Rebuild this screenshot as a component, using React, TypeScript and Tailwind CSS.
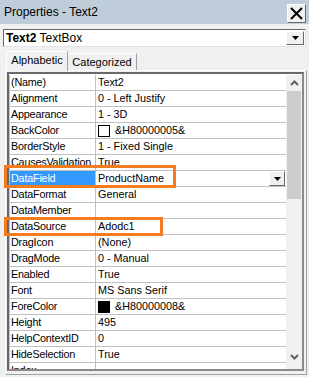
import type { ReactNode } from 'react'

type Row = {
  name: string
  value: string
  swatch?: 'white' | 'black'
  selected?: boolean
}

const rows: Row[] = [
  { name: '(Name)', value: 'Text2' },
  { name: 'Alignment', value: '0 - Left Justify' },
  { name: 'Appearance', value: '1 - 3D' },
  { name: 'BackColor', value: '&H80000005&', swatch: 'white' },
  { name: 'BorderStyle', value: '1 - Fixed Single' },
  { name: 'CausesValidation', value: 'True' },
  { name: 'DataField', value: 'ProductName', selected: true },
  { name: 'DataFormat', value: 'General' },
  { name: 'DataMember', value: '' },
  { name: 'DataSource', value: 'Adodc1' },
  { name: 'DragIcon', value: '(None)' },
  { name: 'DragMode', value: '0 - Manual' },
  { name: 'Enabled', value: 'True' },
  { name: 'Font', value: 'MS Sans Serif' },
  { name: 'ForeColor', value: '&H80000008&', swatch: 'black' },
  { name: 'Height', value: '495' },
  { name: 'HelpContextID', value: '0' },
  { name: 'HideSelection', value: 'True' },
  { name: 'Index', value: '' },
]

function DownTriangle() {
  return (
    <svg width="7" height="4" viewBox="0 0 7 4">
      <path d="M0 0h7L3.5 4z" fill="#000" />
    </svg>
  )
}

function SmallButton({ children, className }: { children: ReactNode; className: string }) {
  return (
    <div
      className={`flex items-center justify-center bg-[#f0f0f0] border border-t-white border-l-white border-r-[#696969] border-b-[#696969] ${className}`}
    >
      {children}
    </div>
  )
}

function PropRow({ row }: { row: Row }) {
  return (
    <div className="flex h-[16px] shrink-0 border-b border-[#c0c0c0]">
      <div
        className={`w-[86px] shrink-0 border-r border-[#c0c0c0] pl-[1px] leading-[15px] tracking-[-0.2px] whitespace-nowrap overflow-hidden ${
          row.selected ? 'bg-[#3399ff] text-white' : 'text-black'
        }`}
      >
        {row.name}
      </div>
      <div className="flex flex-1 items-center pl-[2px] leading-[15px] whitespace-nowrap overflow-hidden">
        {row.swatch && (
          <span
            className={`mr-[5px] h-[12px] w-[12px] border border-black ${
              row.swatch === 'white' ? 'bg-white' : 'bg-black'
            }`}
          />
        )}
        <span className="flex-1">{row.value}</span>
        {row.selected && (
          <SmallButton className="h-[15px] w-[16px] mr-[1px]">
            <DownTriangle />
          </SmallButton>
        )}
      </div>
    </div>
  )
}

export default function App() {
  return (
    <div
      className="relative h-[377px] w-[309px] overflow-hidden bg-[#f0f0f0] text-black"
      style={{ fontFamily: '"Liberation Sans", Arial, sans-serif' }}
    >
      {/* title bar */}
      <div className="flex h-[24px] items-center justify-between bg-[#bfcddb] pl-[4px] pr-[3px]">
        <span className="text-[12px] leading-none">Properties - Text2</span>
        <SmallButton className="mt-[3px] h-[19px] w-[19px]">
          <svg width="13" height="13" viewBox="0 0 13 13">
            <path d="M1 1l11 11M12 1L1 12" stroke="#000" strokeWidth="2" />
          </svg>
        </SmallButton>
      </div>

      {/* object combo */}
      <div className="mx-[3px] mt-[5px] flex h-[18px] items-center border border-t-[#696969] border-l-[#696969] border-r-[#e3e3e3] border-b-[#e3e3e3] bg-white pl-[2px] pr-[1px]">
        <span className="flex-1 text-[12px] leading-none">
          <b>Text2</b> TextBox
        </span>
        <SmallButton className="h-[14px] w-[18px]">
          <DownTriangle />
        </SmallButton>
      </div>

      {/* tabs */}
      <div className="ml-[6px] mt-[4px] flex items-end text-[11px]">
        <div className="relative z-10 -mb-px flex h-[20px] w-[62px] items-center justify-center border border-b-0 border-t-white border-l-white border-r-[#a0a0a0] bg-[#f0f0f0] pb-[2px]">
          Alphabetic
        </div>
        <div className="flex h-[17px] w-[69px] items-center justify-center border border-b-0 border-l-0 border-t-white border-r-[#a0a0a0]">
          Categorized
        </div>
      </div>

      {/* tab page */}
      <div className="ml-[5px] h-[305px] w-[302px] border border-t-white border-l-white border-r-[#a0a0a0] border-b-[#a0a0a0] pl-[1px] pt-px">
        <div className="flex h-[299px] w-[297px] border-2 border-t-[#696969] border-l-[#696969] border-r-[#8a8a8a] border-b-[#8a8a8a] bg-white pt-px text-[10.8px]">
          <div className="flex flex-1 flex-col overflow-hidden border-l border-[#c0c0c0]">
            {rows.map((row) => (
              <PropRow key={row.name} row={row} />
            ))}
          </div>
          {/* scrollbar */}
          <div className="flex w-[16px] shrink-0 flex-col items-center bg-[#f0f0f0]">
            <div className="flex h-[16px] items-center justify-center">
              <svg width="9" height="6" viewBox="0 0 9 6">
                <path d="M1 5l3.5-3.5L8 5" stroke="#606060" strokeWidth="2" fill="none" />
              </svg>
            </div>
            <div className="h-[108px] w-[14px] bg-[#cdcdcd]" />
            <div className="flex-1" />
            <div className="mb-[4px] flex h-[16px] items-center justify-center">
              <svg width="9" height="6" viewBox="0 0 9 6">
                <path d="M1 1l3.5 3.5L8 1" stroke="#606060" strokeWidth="2" fill="none" />
              </svg>
            </div>
          </div>
        </div>
      </div>

      {/* highlight boxes drawn over the grid */}
      <div className="absolute left-[4px] top-[165px] h-[23px] w-[172px] border-[3px] border-[#f47c20]" />
      <div className="absolute left-[4px] top-[217px] h-[19px] w-[159px] border-[3px] border-[#f47c20]" />
    </div>
  )
}
